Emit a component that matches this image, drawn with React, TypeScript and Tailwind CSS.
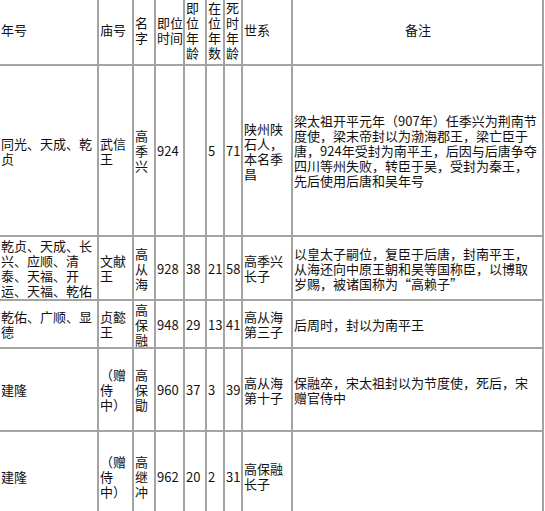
import React from 'react';

interface Row {
  era: string;
  temple: string[];
  name: string;
  year: string;
  age: string;
  reign: string;
  death: string;
  lineage: string;
  note: string;
  height: string;
}

const rows: Row[] = [
  {
    era: '同光、天成、乾贞',
    temple: ['武信王'],
    name: '高季兴',
    year: '924',
    age: '',
    reign: '5',
    death: '71',
    lineage: '陕州陕石人，本名季昌',
    note: '梁太祖开平元年（907年）任季兴为荆南节度使，梁末帝封以为渤海郡王，梁亡臣于唐，924年受封为南平王，后因与后唐争夺四川等州失败，转臣于吴，受封为秦王，先后使用后唐和吴年号',
    height: 'h-[171px]',
  },
  {
    era: '乾贞、天成、长兴、应顺、清泰、天福、开运、天福、乾佑',
    temple: ['文献王'],
    name: '高从海',
    year: '928',
    age: '38',
    reign: '21',
    death: '58',
    lineage: '高季兴长子',
    note: '以皇太子嗣位，复臣于后唐，封南平王，从海还向中原王朝和吴等国称臣，以博取岁赐，被诸国称为“高赖子”',
    height: 'h-[64px]',
  },
  {
    era: '乾佑、广顺、显德',
    temple: ['贞懿王'],
    name: '高保融',
    year: '948',
    age: '29',
    reign: '13',
    death: '41',
    lineage: '高从海第三子',
    note: '后周时，封以为南平王',
    height: 'h-[48px]',
  },
  {
    era: '建隆',
    temple: ['（赠', '侍', '中）'],
    name: '高保勖',
    year: '960',
    age: '37',
    reign: '3',
    death: '39',
    lineage: '高从海第十子',
    note: '保融卒，宋太祖封以为节度使，死后，宋赠官侍中',
    height: 'h-[83px]',
  },
  {
    era: '建隆',
    temple: ['（赠', '侍', '中）'],
    name: '高继冲',
    year: '962',
    age: '20',
    reign: '2',
    death: '31',
    lineage: '高保融长子',
    note: '',
    height: 'h-[90px]',
  },
];

// classic bordered table cell: grey 2px rule, no padding, middle aligned
const base = 'border-2 border-[#a3a3a3] p-0 pl-[1px] align-middle leading-[15px]';
const cell = `${base} text-left`;

export default function App() {
  return (
    <div className="w-[545px] h-[511px] overflow-hidden bg-white text-[13px] text-[#111] font-['Noto_Sans_CJK_SC',sans-serif]">
      <table className="table-fixed border-collapse -ml-[2px] -mt-[7px] w-[544px]">
        <colgroup>
          <col className="w-[99px]" />
          <col className="w-[35px]" />
          <col className="w-[22px]" />
          <col className="w-[29px]" />
          <col className="w-[22px]" />
          <col className="w-[18px]" />
          <col className="w-[18px]" />
          <col className="w-[50px]" />
          <col className="w-[251px]" />
        </colgroup>
        <thead>
          <tr className="h-[71px]">
            <th className={`${cell} font-normal`}>年号</th>
            <th className={`${cell} font-normal`}>庙号</th>
            <th className={`${cell} font-normal`}>名字</th>
            <th className={`${cell} font-normal`}>即位时间</th>
            <th className={`${cell} font-normal`}>即位年龄</th>
            <th className={`${cell} font-normal`}>在位年数</th>
            <th className={`${cell} font-normal`}>死时年龄</th>
            <th className={`${cell} font-normal`}>世系</th>
            <th className={`${base} font-normal text-center`}>备注</th>
          </tr>
        </thead>
        <tbody>
          {rows.map((r, i) => (
            <tr key={i} className={r.height}>
              <td className={cell}>{r.era}</td>
              <td className={cell}>
                {r.temple.map((t, j) => (
                  <div key={j}>{t}</div>
                ))}
              </td>
              <td className={cell}>{r.name}</td>
              <td className={cell}>{r.year}</td>
              <td className={cell}>{r.age}</td>
              <td className={cell}>{r.reign}</td>
              <td className={cell}>{r.death}</td>
              <td className={cell}>{r.lineage}</td>
              <td className={`${cell} pr-[3px]`}>{r.note}</td>
            </tr>
          ))}
        </tbody>
      </table>
    </div>
  );
}
